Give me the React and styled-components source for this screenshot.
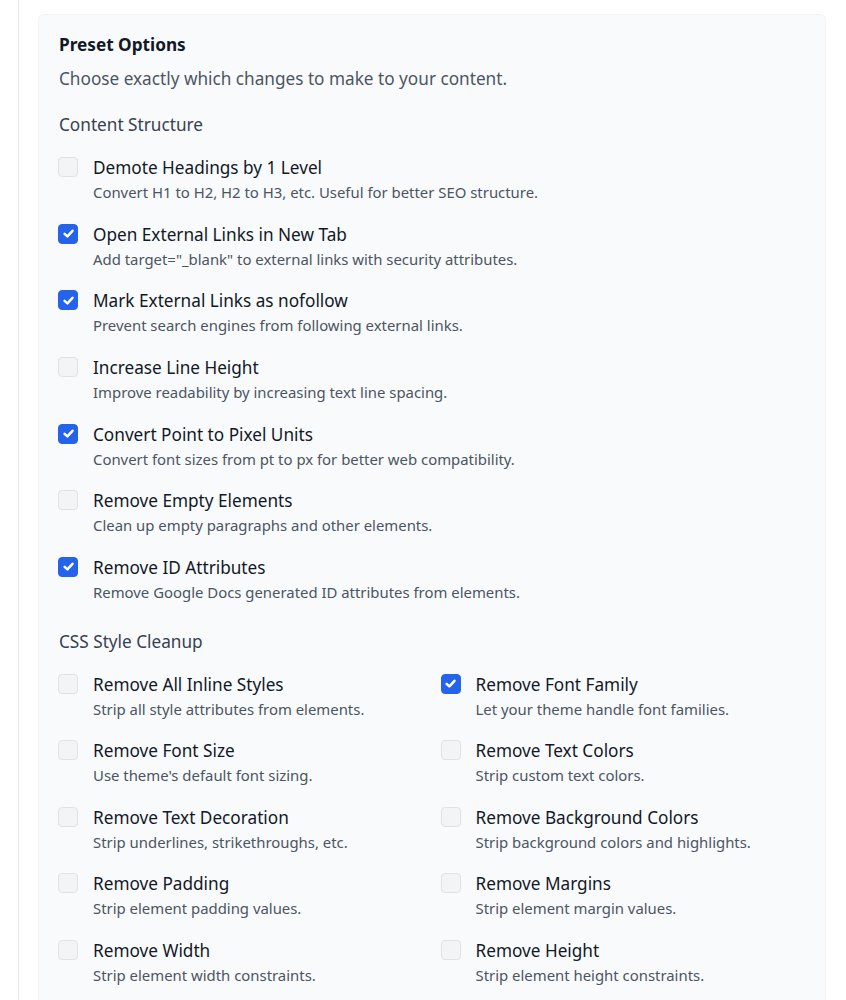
import styled, { createGlobalStyle } from 'styled-components';

const GlobalStyle = createGlobalStyle`
  html, body {
    margin: 0;
    padding: 0;
    background: #ffffff;
    font-family: "Noto Sans", "Open Sans", sans-serif;
  }
`;

const structureOptions = [
  { label: 'Demote Headings by 1 Level', desc: 'Convert H1 to H2, H2 to H3, etc. Useful for better SEO structure.', checked: false },
  { label: 'Open External Links in New Tab', desc: 'Add target="_blank" to external links with security attributes.', checked: true },
  { label: 'Mark External Links as nofollow', desc: 'Prevent search engines from following external links.', checked: true },
  { label: 'Increase Line Height', desc: 'Improve readability by increasing text line spacing.', checked: false },
  { label: 'Convert Point to Pixel Units', desc: 'Convert font sizes from pt to px for better web compatibility.', checked: true },
  { label: 'Remove Empty Elements', desc: 'Clean up empty paragraphs and other elements.', checked: false },
  { label: 'Remove ID Attributes', desc: 'Remove Google Docs generated ID attributes from elements.', checked: true },
];

const cssOptions = [
  { label: 'Remove All Inline Styles', desc: 'Strip all style attributes from elements.', checked: false },
  { label: 'Remove Font Family', desc: 'Let your theme handle font families.', checked: true },
  { label: 'Remove Font Size', desc: "Use theme's default font sizing.", checked: false },
  { label: 'Remove Text Colors', desc: 'Strip custom text colors.', checked: false },
  { label: 'Remove Text Decoration', desc: 'Strip underlines, strikethroughs, etc.', checked: false },
  { label: 'Remove Background Colors', desc: 'Strip background colors and highlights.', checked: false },
  { label: 'Remove Padding', desc: 'Strip element padding values.', checked: false },
  { label: 'Remove Margins', desc: 'Strip element margin values.', checked: false },
  { label: 'Remove Width', desc: 'Strip element width constraints.', checked: false },
  { label: 'Remove Height', desc: 'Strip element height constraints.', checked: false },
];

function Option({ label, desc, checked }) {
  return (
    <Item>
      <Box $checked={checked}>
        {checked && (
          <svg width="13" height="13" viewBox="0 0 12 12" fill="none">
            <path d="M2.4 6.3 L5 8.7 L9.7 3.5" stroke="#fff" strokeWidth="2.3" strokeLinecap="round" strokeLinejoin="round" />
          </svg>
        )}
      </Box>
      <div>
        <Label>{label}</Label>
        <Desc>{desc}</Desc>
      </div>
    </Item>
  );
}

export default function App() {
  return (
    <>
      <GlobalStyle />
      <Page>
        <Panel>
          <Title>Preset Options</Title>
          <Intro>Choose exactly which changes to make to your content.</Intro>

          <Section>
            <SectionTitle>Content Structure</SectionTitle>
            <List>
              {structureOptions.map((o) => (
                <Option key={o.label} {...o} />
              ))}
            </List>
          </Section>

          <Section>
            <SectionTitle>CSS Style Cleanup</SectionTitle>
            <Grid>
              {cssOptions.map((o) => (
                <Option key={o.label} {...o} />
              ))}
            </Grid>
          </Section>
        </Panel>
      </Page>
    </>
  );
}

const Page = styled.div`
  margin-left: 18px;
  border-left: 1px solid #e5e7eb;
  padding: 14px 20px 0 19px;
  min-height: 1000px;
  box-sizing: border-box;
`;

const Panel = styled.div`
  background: #f9fafb;
  border: 1px solid #f3f4f6;
  border-bottom: none;
  border-radius: 6px 6px 0 0;
  padding: 18px 20px 40px 19px;
`;

const Title = styled.h3`
  margin: 0 0 0 1px;
  font-size: 17.2px;
  line-height: 24px;
  font-weight: 700;
  color: #111827;
`;

const Intro = styled.p`
  margin: 10px 0 0 1px;
  font-size: 17.2px;
  line-height: 24px;
  color: #4b5563;
`;

const Section = styled.div`
  margin-top: 22px;

  & + & {
    margin-top: 28px;
  }
`;

const SectionTitle = styled.h4`
  margin: 0 0 19px 1px;
  font-size: 17.2px;
  line-height: 24px;
  font-weight: 400;
  color: #374151;
`;

const List = styled.div`
  display: flex;
  flex-direction: column;
  row-gap: 20.67px;
`;

const Grid = styled.div`
  display: grid;
  grid-template-columns: 1fr 1fr;
  column-gap: 18px;
  row-gap: 20.5px;
`;

const Item = styled.div`
  display: flex;
  align-items: flex-start;
  gap: 15px;
`;

const Box = styled.span`
  flex: none;
  box-sizing: border-box;
  width: 20px;
  height: 20px;
  margin-top: 1px;
  border-radius: 4px;
  display: flex;
  align-items: center;
  justify-content: center;
  background: ${(p) => (p.$checked ? '#2563eb' : '#f3f4f6')};
  border: 1px solid ${(p) => (p.$checked ? '#2563eb' : '#dfe2e7')};
`;

const Label = styled.div`
  font-size: 17.2px;
  line-height: 24px;
  color: #111827;
`;

const Desc = styled.div`
  margin-top: 2px;
  font-size: 14.9px;
  line-height: 20px;
  color: #4b5563;
`;
